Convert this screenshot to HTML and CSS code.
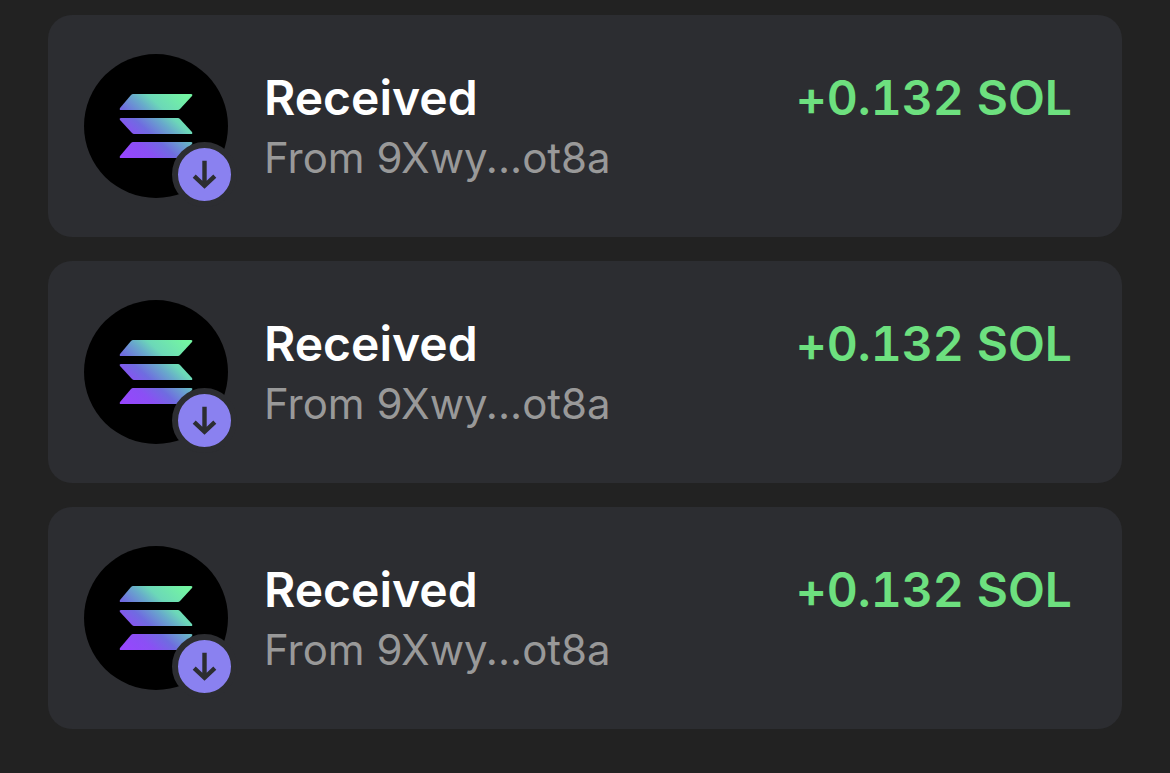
FILE: index.html
```html
<!DOCTYPE html>
<html lang="en">
<head>
<meta charset="utf-8">
<meta name="viewport" content="width=device-width, initial-scale=1">
<title>Activity</title>
<link rel="stylesheet" href="styles.css">
</head>
<body>
<svg class="defs" width="0" height="0" aria-hidden="true">
  <defs>
    <linearGradient id="sol" gradientUnits="userSpaceOnUse" x1="42" y1="108" x2="102" y2="42">
      <stop offset="0" stop-color="#9945ff"/>
      <stop offset="0.25" stop-color="#8a50f4"/>
      <stop offset="0.42" stop-color="#6f6ce0"/>
      <stop offset="0.6" stop-color="#68aacb"/>
      <stop offset="0.72" stop-color="#6cd8b8"/>
      <stop offset="1" stop-color="#73f5a2"/>
    </linearGradient>
    <symbol id="coin" viewBox="0 0 144 144">
      <circle cx="72" cy="72" r="72" fill="#000"/>
      <g fill="url(#sol)">
        <path d="M49 40H107Q109 40 108 42L96 55Q95 56 94 56H37Q35 56 36 54L47 41Q48 40 49 40Z"/>
        <path d="M37 64H94Q95 64 96 65L108 78Q109 80 107 80H50Q49 80 48 79L36 66Q35 64 37 64Z"/>
        <path d="M49 88H107Q109 88 108 90L96 103Q95 104 94 104H37Q35 104 36 102L47 89Q48 88 49 88Z"/>
      </g>
    </symbol>
    <symbol id="down" viewBox="0 0 53 53">
      <path d="M26.5 12.7V37.5M16.2 28.2L26.5 37.8L36.8 28.2" fill="none" stroke="#2c2d31" stroke-width="4.4"/>
    </symbol>
  </defs>
</svg>
<ul class="list">
  <li class="card">
    <div class="avatar"><svg class="coin" aria-hidden="true"><use href="#coin"/></svg><span class="badge"><svg class="arrow" aria-hidden="true"><use href="#down"/></svg></span></div>
    <div class="info"><div class="title">Received</div><div class="from">From 9Xwy...ot8a</div></div>
    <div class="amount">+0.132 SOL</div>
  </li>
  <li class="card">
    <div class="avatar"><svg class="coin" aria-hidden="true"><use href="#coin"/></svg><span class="badge"><svg class="arrow" aria-hidden="true"><use href="#down"/></svg></span></div>
    <div class="info"><div class="title">Received</div><div class="from">From 9Xwy...ot8a</div></div>
    <div class="amount">+0.132 SOL</div>
  </li>
  <li class="card">
    <div class="avatar"><svg class="coin" aria-hidden="true"><use href="#coin"/></svg><span class="badge"><svg class="arrow" aria-hidden="true"><use href="#down"/></svg></span></div>
    <div class="info"><div class="title">Received</div><div class="from">From 9Xwy...ot8a</div></div>
    <div class="amount">+0.132 SOL</div>
  </li>
</ul>
</body>
</html>
```
FILE: styles.css
```css
body {
  margin: 0;
  background: #222222;
  font-family: Inter, Roboto, sans-serif;
}
.defs { position: absolute; }
.list {
  list-style: none;
  margin: 0;
  padding: 15px 48px 44px;
  display: flex;
  flex-direction: column;
  gap: 24px;
}
.card {
  display: flex;
  align-items: flex-start;
  padding: 39px 50px 39px 36px;
  border-radius: 24px;
  background: #2c2d31;
}
.avatar {
  position: relative;
  flex: none;
  width: 144px;
  height: 144px;
}
.coin { display: block; width: 144px; height: 144px; }
.badge {
  position: absolute;
  right: -9px;
  bottom: -9px;
  width: 53px;
  height: 53px;
  border: 6px solid #2c2d31;
  border-radius: 50%;
  background: #8a81f0;
}
.arrow { display: block; width: 53px; height: 53px; }
.info {
  flex: 1;
  min-width: 0;
  margin-left: 36px;
  padding-top: 14px;
}
.title {
  color: #fff;
  font-size: 48px;
  font-weight: 600;
  line-height: 60px;
}
.from {
  color: #999999;
  font-size: 42px;
  line-height: 60px;
}
.amount {
  padding-top: 14px;
  color: #6de07f;
  font-size: 48px;
  font-weight: 600;
  font-variant-numeric: tabular-nums;
  font-variant-ligatures: no-contextual;
  line-height: 60px;
}
```
